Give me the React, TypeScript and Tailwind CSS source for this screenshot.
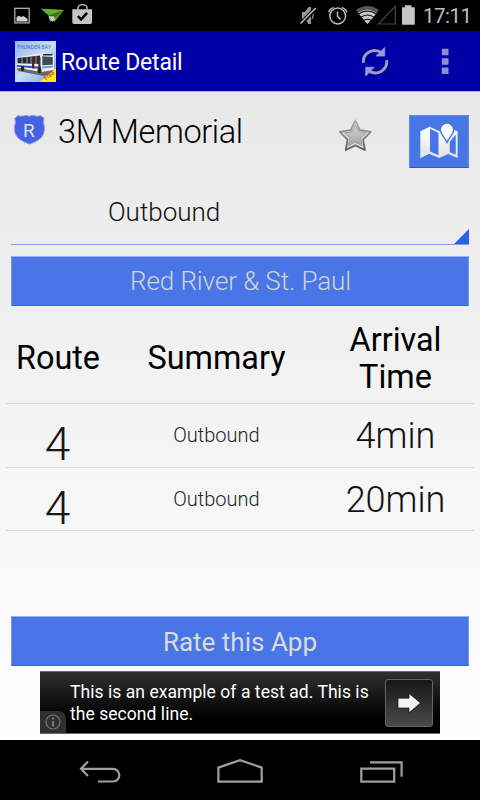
import React from "react";

const roboto = "font-['Roboto','Noto_Sans',sans-serif]";

function StatusBar() {
  return (
    <header className="flex h-[31px] shrink-0 items-center bg-black">
      <svg width="240" height="31" viewBox="0 0 240 31">
        <rect x="14.8" y="8.3" width="14.4" height="14.6" fill="none" stroke="#bcbcbc" strokeWidth="1.2" />
        <path d="M16.5 21.5v-4l2.5-2 2 1.5 2.5-1 2 1.5 2 1.5v2.5z" fill="#d0d0d0" />
        <path d="M41 8.8l23 1.2-9.5 12-3-5z" fill="#4d9421" />
        <path d="M41 8.8l23 1.2-15 6z" fill="#66ad32" />
        <path d="M48 15.5l14-4.7-7.2 7.2-4.8 4z" fill="#387614" />
        <path d="M49 16l5 .6 1.3 3-3 2.2-2.5-2z" fill="#c5c9bd" />
        <path d="M78 9.5V8a4.5 3.4 0 0 1 9 0v1.5" fill="none" stroke="#c4c4c4" strokeWidth="1.4" />
        <path d="M72.3 9.2h19.7v13q0 1.8-1.8 1.8H74.1q-1.8 0-1.8-1.8z" fill="#c4c4c4" />
        <path d="M77.8 16l3.3 3.4 6-6.6" fill="none" stroke="#000" strokeWidth="2.5" />
      </svg>
      <svg width="180" height="31" viewBox="240 0 180 31">
        <path d="M302 12h3l3.5-5h2.5v17h-2.5l-3.5-5h-3z" fill="#999" />
        <path d="M312 11q2.2 4 0 8" stroke="#999" strokeWidth="1.2" fill="none" />
        <path d="M315.5 8.5L300.5 24" stroke="#000" strokeWidth="4" />
        <path d="M315.8 8L300.5 23.5" stroke="#bcbcbc" strokeWidth="1.5" />
        <circle cx="337.7" cy="16" r="7.9" fill="none" stroke="#bcbcbc" strokeWidth="1.5" />
        <path d="M337.5 11.5v4.8l3 3.2M328.6 12.2q1.3-3.4 5-4.8M347 12.2q-1.3-3.4-5-4.8" fill="none" stroke="#bcbcbc" strokeWidth="1.5" />
        <path d="M356 10q11.4-8 23 0L367.5 24z" fill="#555" />
        <path d="M358 13q9.5-7 19 0l-9.5 11z" fill="#c5c5c5" />
        <path d="M358.2 14.2q9.3-6.4 18.6 0M360.7 17.4q6.8-4.8 13.6 0M363.8 20.4q3.7-2.4 7.4 0" fill="none" stroke="#000" strokeWidth="1.1" />
        <path d="M378.5 24L395.3 6.3V24z" fill="none" stroke="#444" strokeWidth="1.2" />
        <path d="M402 7.3h3V5.2h6.5v2.1h3.3v17.5H402z" fill="#c4c4c4" />
      </svg>
      <span className="w-[48px] whitespace-nowrap pt-[2px] text-[20.5px] leading-none tracking-[-0.5px] text-[#bebebe]">
        <span className="ml-[3px]">17:11</span>
      </span>
    </header>
  );
}

function BusLogo() {
  return (
    <svg width="41" height="41" viewBox="0 0 41 41" className="ml-[15px] overflow-visible">
      <defs>
        <linearGradient id="sky" x1="0" y1="0" x2="1" y2="1">
          <stop stopColor="#8fb9ec" />
          <stop offset=".5" stopColor="#c7ddf3" />
          <stop offset="1" stopColor="#6f9fdd" />
        </linearGradient>
      </defs>
      <rect width="41" height="41" fill="url(#sky)" />
      <text x="2" y="8" fontSize="6" textLength="34" lengthAdjust="spacingAndGlyphs" fill="#3c66c8" className="font-['Roboto']">THUNDER BAY</text>
      <path d="M2 27l23 3 13-1 1 3-10 3-26-5z" fill="#6d6470" />
      <path d="M2 16.5L27 12l12 1.5V29l-13 2L2 26.5z" fill="#f0f0ee" />
      <path d="M2.5 17L25 14.5V23L2.5 22.3z" fill="#252c33" />
      <path d="M7 16.5v6M12 16v6.6M16 15.6v7M21 15v8" stroke="#c9cdd0" strokeWidth=".7" />
      <path d="M27.3 15.3l10.5.6v7.8l-10.5.5z" fill="#394e56" />
      <path d="M28 13h9.5v1.5H28z" fill="#282828" />
      <path d="M2 24l24 1.8v2.3L2 25.8z" fill="#334dca" />
      <path d="M27 25.4l11-.6v1.8l-11 .8z" fill="#7391e1" />
      <path d="M17 16.2l2.2-.2v11.4l-2.2-.2zM23.3 16h2.2v14l-2.2-.2z" fill="#4a2827" />
      <ellipse cx="7.5" cy="27.5" rx="1.8" ry="2.4" fill="#222" />
      <ellipse cx="24.5" cy="29.5" rx="2" ry="2.7" fill="#222" />
      <path d="M41 27.5V41H24.5z" fill="#ffeb16" />
      <text x="0" y="0" fontSize="5.8" fontWeight="500" fill="#e43a20" transform="translate(30.8 39.4) rotate(-36)" className="font-['Roboto']">Free</text>
    </svg>
  );
}

function ActionBar() {
  return (
    <div className="flex h-[60px] shrink-0 items-center bg-[#0000a7]">
      <BusLogo />
      <h1 className="ml-[5px] w-[294px] whitespace-nowrap pt-[2px] text-[23px] leading-none tracking-[-0.2px] text-white">Route Detail</h1>
      <svg width="125" height="60" viewBox="355 31 125 60">
        <g fill="none" stroke="#00005f" strokeWidth="5">
          <path d="M363.4 62.5c-.8-9 9.5-15.5 18.5-9.5M386.8 60.5c.8 9-9 16-18.5 10" />
        </g>
        <g fill="none" stroke="#9a9adb" strokeWidth="3">
          <path d="M363.4 62.8c-.8-9.5 9.5-16 19-9.8M386.8 60.2c.8 9.5-9 16.5-18.5 10.5" />
        </g>
        <path d="M384.7 47.5V56h-8.5zM365.7 76v-8.7h8.5z" fill="#9a9adb" stroke="#9a9adb" strokeWidth=".8" />
        <path d="M441.8 48.7h6.7v6.5h-6.7zM441.8 58.2h6.7v6.5h-6.7zM441.8 67.6h6.7v6.5h-6.7z" fill="#8d8dd7" />
      </svg>
    </div>
  );
}

function RouteHeading() {
  return (
    <section className="flex h-[84px] items-start">
      <svg width="32" height="32" viewBox="14 114 32 32" className="ml-[14px] mt-[23px]">
        <path d="M17.8 115.6q2.4 1.2 5.4.4 3.5-1.5 6 .4 2.6-1.9 6-.4 3 .8 5.8-.4l3 3q-1.4 3 .4 8 .8 8-5 12.6-5 3.6-9.9 4.8-5-1.2-9.9-4.8-6-4.6-5-12.6 1.6-5 .2-8z" fill="#4661e2" stroke="#8a96d8" strokeWidth=".9" />
        <text x="23" y="136.5" fontSize="19" fill="#dde2f8" className="font-['Roboto']">R</text>
      </svg>
      <h2 className="ml-[12px] mt-[23px] w-[279px] whitespace-nowrap text-[32.5px] font-light leading-[36px] tracking-[-0.4px] text-black">3M Memorial</h2>
      <svg width="36" height="36" viewBox="337 117 36 36" className="mt-[26px]">
        <defs>
          <linearGradient id="star" x2="0" y2="1">
            <stop stopColor="#d4d4d4" />
            <stop offset="1" stopColor="#a4a4a4" />
          </linearGradient>
          <linearGradient id="rim" x2="0" y2="1">
            <stop stopColor="#b0b0b0" />
            <stop offset="1" stopColor="#5c5c5c" />
          </linearGradient>
        </defs>
        <path d="M355.3 120.4l4.5 9.6 11 1.9-7.7 7.7 1.8 10.4-9.6-4.6-9.5 4.6 1.7-10.4-7.7-7.7 11-1.9z" fill="#dedede" stroke="url(#rim)" strokeWidth="1.8" strokeLinejoin="round" />
        <path d="M355.3 125l3.4 6.8 7.4 1.1-5.3 5.3 1.3 7.5-6.8-3.4-6.8 3.4 1.3-7.5-5.3-5.3 7.4-1.1z" fill="url(#star)" stroke="#a2a2a2" />
      </svg>
      <button className="ml-[36px] mt-[24px] h-[53px] w-[60px] border border-t-[#638bed] border-r-[#6489e5] border-b-[#2f59ba] border-l-[#6489e5] bg-[#4776e6]">
        <svg width="58" height="51" viewBox="410 116 58 51">
          <defs>
            <linearGradient id="paper" x2="0" y2="1">
              <stop stopColor="#fff" />
              <stop offset="1" stopColor="#e2e2e2" />
            </linearGradient>
          </defs>
          <path d="M420.3 131.2l9.3-4.5 9.5 4.6 9-4 9.5 4v26.8l-9.2-4.2-9.3 4-9.8-4.2-9 4.6z" fill="url(#paper)" />
          <path d="M430 128.8l8.5 4v22.5l-8.5-3.7zM449.7 142l6-7.5v20.3l-6-2.6z" fill="#4776e6" />
          <path d="M447 142.5c-2-5.6-6.7-7.8-6.7-12.7a6.7 6.7 0 0 1 13.4 0c0 4.9-4.7 7.1-6.7 12.7z" fill="#fafafa" stroke="#4776e6" strokeWidth="1.4" />
        </svg>
      </button>
    </section>
  );
}

function Stop({ time }: { time: string }) {
  return (
    <div className="flex h-[63.5px] border-b border-[#dadada]">
      <div className="w-[103px] pt-[14px] text-center text-[46px] leading-[52px] text-[#181818] font-light">4</div>
      <div className="w-[215px] pt-[19px] text-center text-[20px] leading-6 text-[#252525] font-light">Outbound</div>
      <div className="w-[143px] pt-[11px] text-center text-[36px] leading-[42px] text-[#111] font-light">{time}</div>
    </div>
  );
}

const blueButton = "mx-[11px] block h-[50px] border border-t-[#9cb5f0] border-x-[#7595e7] border-b-[#3864c6] bg-[#4876e6] text-center leading-[48px]";

function Ad() {
  return (
    <aside className="mx-auto mt-[5px] flex h-[63px] w-[400px] items-center border-y border-y-[#686868] bg-linear-to-b from-[#303030] via-[#101010] to-black">
      <div className="flex h-full w-[26px] items-end">
        <div className="flex h-[22px] w-[26px] items-center justify-center rounded-tr-lg bg-[#303030]">
          <svg width="16" height="16" viewBox="0 0 16 16">
            <circle cx="8" cy="8" r="7" fill="none" stroke="#777" strokeWidth="1.2" />
            <path d="M7 7h2v5.5H7zM7 3.5h2v2H7z" fill="#777" />
          </svg>
        </div>
      </div>
      <p className="ml-1 w-[315px] whitespace-nowrap pt-px text-[17.5px] leading-[22.5px] tracking-[0.05px] text-white">This is an example of a test ad. This is<br />the second line.</p>
      <div className="flex size-[48px] items-center justify-center rounded-[3px] border-[1.5px] border-[#666] bg-linear-to-b from-[#171717] to-[#4b4b4b]">
        <svg width="26" height="24" viewBox="0 0 26 24"><path d="M2 7.2h11V2.4L24.5 12 13 21.8V17H2z" fill="#f3f3f3" stroke="#111" strokeWidth=".7" /></svg>
      </div>
    </aside>
  );
}

function NavigationBar() {
  return (
    <nav className="h-[60px] shrink-0 bg-black">
      <svg width="480" height="60" viewBox="0 740 480 60">
        <g fill="none" stroke="#a0a0a0" strokeWidth="2.2">
          <path d="M98 781.5h15a6.3 6.3 0 0 0 0-12.7H81M88 761.5l-7 7.3 7 7.2" />
          <path d="M218.4 781.7v-14.1l21.6-7.5 21.7 7.5v14.1z" />
          <path d="M361.3 768.6h32.9v13.1h-32.9zM370 762.3h31.6v14.4" />
        </g>
      </svg>
    </nav>
  );
}

export default function App() {
  return (
    <div className={`${roboto} flex h-[800px] w-[480px] flex-col overflow-hidden bg-white`}>
      <StatusBar />
      <ActionBar />
      <main className="flex h-[649px] shrink-0 flex-col border-t border-[#b4b4b8] bg-linear-to-b from-[#e8e8e8] to-white">
        <div className="-mt-px">
          <RouteHeading />
          <div className="mx-[11px] h-[70px] border-b border-[#7f9ce8]">
            <div className="flex h-full items-end justify-between">
              <span className="ml-[97px] self-start pt-[21px] text-[26px] font-light leading-[32px] text-[#111]">Outbound</span>
              <svg width="15" height="15" viewBox="0 0 15 15"><path d="M15 0v15H0z" fill="#2f61e4" /></svg>
            </div>
          </div>
          <div className="pt-[11px]">
            <button className={`${blueButton} w-[458px] pl-px text-[26px] font-light tracking-[-0.08px] text-[#d3d3d3]`}>Red River &amp; St. Paul</button>
          </div>
          <div className="mx-[6px]">
            <div className="flex h-[98px] items-center border-b border-[#d9d9d9] pt-[8px] text-center text-[32.4px] leading-[37px] text-black">
              <div className="w-[104px]">Route</div>
              <div className="w-[213px]">Summary</div>
              <div className="w-[145px]">Arrival<br />Time</div>
            </div>
            <Stop time="4min" />
            <Stop time="20min" />
          </div>
        </div>
        <div className="mt-auto pb-[6px]">
          <button className={`${blueButton} w-[458px] pt-px text-[26px] text-[#dbdbdb]`}>Rate this App</button>
          <Ad />
        </div>
      </main>
      <NavigationBar />
    </div>
  );
}
